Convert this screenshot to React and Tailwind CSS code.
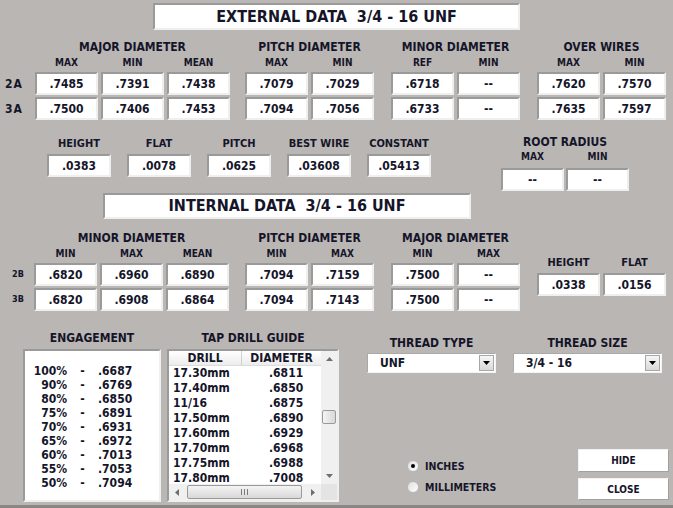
import React from "react";

const FONT = "font-[family-name:'DejaVu_Sans_Condensed','DejaVu_Sans',sans-serif]";
const SUNKEN =
  "bg-white border-2 border-t-[#9a9a9a] border-l-[#9a9a9a] border-r-[#efefef] border-b-[#efefef]";

const Field = ({ children, className = "" }) => (
  <div className={`flex items-center justify-center ${SUNKEN} text-[12px] font-bold leading-none ${className}`}>
    {children}
  </div>
);

const Group = ({ title, cols, rows, className = "" }) => (
  <div className={`flex flex-col ${className}`}>
    <div className="h-[14px] text-center text-[12px] font-bold leading-[14px]">{title}</div>
    <div className="mt-[2px] flex gap-[3px]">
      {cols.map((c) => (
        <div key={c} className="h-[13px] w-[63px] text-center text-[10px] font-bold leading-[13px]">
          {c}
        </div>
      ))}
    </div>
    <div className="mt-[3px] flex flex-col gap-[2px]">
      {rows.map((r, i) => (
        <div key={i} className="flex gap-[3px]">
          {r.map((v, j) => (
            <Field key={j} className="h-[23px] w-[63px]">
              {v}
            </Field>
          ))}
        </div>
      ))}
    </div>
  </div>
);

const RowLabels = ({ labels, className }) => (
  <div className={`flex flex-col pt-[32px] ${className}`}>
    {labels.map((l, i) => (
      <div key={l} className={`flex h-[23px] items-center font-bold ${i ? "mt-[2px]" : ""}`}>
        {l}
      </div>
    ))}
  </div>
);

const Triangle = ({ dir, className = "" }) => {
  const pts = {
    up: "0,4 3.5,0 7,4",
    down: "0,0 7,0 3.5,4",
    left: "4,0 4,7 0,3.5",
    right: "0,0 0,7 4,3.5",
  }[dir];
  const vb = dir === "up" || dir === "down" ? "0 0 7 4" : "0 0 4 7";
  const size = dir === "up" || dir === "down" ? "w-[7px] h-[4px]" : "w-[4px] h-[7px]";
  return (
    <svg viewBox={vb} className={`${size} ${className}`}>
      <polygon points={pts} fill="currentColor" />
    </svg>
  );
};

const Dropdown = ({ value, className = "" }) => (
  <div className={`flex h-[20px] items-center bg-white border border-t-[#a9a9a9] border-l-[#a9a9a9] border-r-[#f4f4f4] border-b-[#f4f4f4] ${className}`}>
    <span className="flex-1 pl-[12px] text-[12px] font-bold leading-none">{value}</span>
    <div className="mr-[1px] flex h-[16px] w-[15px] items-center justify-center border border-[#a7a7a7] bg-gradient-to-b from-[#f6f6f6] to-[#d9d9d9] text-black">
      <Triangle dir="down" />
    </div>
  </div>
);

const Radio = ({ checked, label }) => (
  <div className="flex h-[12px] items-center">
    <div className="flex h-[12px] w-[12px] items-center justify-center rounded-full border border-[#b8b8b8] bg-gradient-to-br from-[#dedede] to-white">
      {checked && <div className="h-[4px] w-[4px] rounded-full bg-black" />}
    </div>
    <span className="ml-[6px] text-[10.5px] font-bold leading-none">{label}</span>
  </div>
);

const Button = ({ children, className = "" }) => (
  <div className={`flex w-[91px] items-center justify-center border border-t-[#f2f2f2] border-l-[#f2f2f2] border-r-[#a0a0a0] border-b-[#a0a0a0] bg-white text-[10px] font-bold ${className}`}>
    {children}
  </div>
);

const engagement = [
  ["100%", ".6687"],
  ["90%", ".6769"],
  ["80%", ".6850"],
  ["75%", ".6891"],
  ["70%", ".6931"],
  ["65%", ".6972"],
  ["60%", ".7013"],
  ["55%", ".7053"],
  ["50%", ".7094"],
];

const drills = [
  ["17.30mm", ".6811"],
  ["17.40mm", ".6850"],
  ["11/16", ".6875"],
  ["17.50mm", ".6890"],
  ["17.60mm", ".6929"],
  ["17.70mm", ".6968"],
  ["17.75mm", ".6988"],
  ["17.80mm", ".7008"],
];

export default function App() {
  return (
    <div className={`flex h-[508px] w-[673px] flex-col overflow-hidden bg-[#bab6b3] text-[#15152a] ${FONT}`}>
      {/* external header */}
      <div className={`ml-[153px] mt-[3px] flex h-[27px] w-[367px] items-center justify-center ${SUNKEN} text-[16px] font-bold`}>
        EXTERNAL DATA&nbsp;&nbsp;3/4 - 16&nbsp;UNF
      </div>

      {/* external table */}
      <div className="mt-[10px] flex">
        <RowLabels labels={["2A", "3A"]} className="w-[35px] pl-[5px] text-[12px] tracking-[1px]" />
        <Group
          title="MAJOR DIAMETER"
          cols={["MAX", "MIN", "MEAN"]}
          rows={[
            [".7485", ".7391", ".7438"],
            [".7500", ".7406", ".7453"],
          ]}
        />
        <Group
          className="ml-[15px]"
          title="PITCH DIAMETER"
          cols={["MAX", "MIN"]}
          rows={[
            [".7079", ".7029"],
            [".7094", ".7056"],
          ]}
        />
        <Group
          className="ml-[17px]"
          title="MINOR DIAMETER"
          cols={["REF", "MIN"]}
          rows={[
            [".6718", "--"],
            [".6733", "--"],
          ]}
        />
        <Group
          className="ml-[17px]"
          title="OVER WIRES"
          cols={["MAX", "MIN"]}
          rows={[
            [".7620", ".7570"],
            [".7635", ".7597"],
          ]}
        />
      </div>

      {/* constants */}
      <div className="mt-[16px] flex items-start">
        <div className="ml-[47px] mt-[1px] flex gap-[16px]">
          {[
            ["HEIGHT", ".0383"],
            ["FLAT", ".0078"],
            ["PITCH", ".0625"],
            ["BEST WIRE", ".03608"],
            ["CONSTANT", ".05413"],
          ].map(([l, v]) => (
            <div key={l} className="flex w-[64px] flex-col">
              <div className="h-[13px] text-center text-[11px] font-bold leading-[13px]">{l}</div>
              <Field className="mt-[4px] h-[23px]">{v}</Field>
            </div>
          ))}
        </div>
        <div className="ml-[70px] flex flex-col">
          <div className="h-[13px] text-center text-[12px] font-bold leading-[13px]">ROOT RADIUS</div>
          <div className="mt-[2px] flex gap-[2px]">
            <div className="h-[12px] w-[63px] text-center text-[10px] font-bold leading-[12px]">MAX</div>
            <div className="h-[12px] w-[63px] text-center text-[10px] font-bold leading-[12px]">MIN</div>
          </div>
          <div className="mt-[5px] flex gap-[2px]">
            <Field className="h-[23px] w-[63px]">--</Field>
            <Field className="h-[23px] w-[63px]">--</Field>
          </div>
        </div>
      </div>

      {/* internal header */}
      <div className={`ml-[103px] mt-[2px] flex h-[26px] w-[368px] items-center justify-center ${SUNKEN} text-[16px] font-bold`}>
        INTERNAL DATA&nbsp;&nbsp;3/4 - 16&nbsp;UNF
      </div>

      {/* internal table */}
      <div className="mt-[12px] flex">
        <RowLabels labels={["2B", "3B"]} className="w-[34px] pl-[12px] text-[9px]" />
        <Group
          title="MINOR DIAMETER"
          cols={["MIN", "MAX", "MEAN"]}
          rows={[
            [".6820", ".6960", ".6890"],
            [".6820", ".6908", ".6864"],
          ]}
        />
        <Group
          className="ml-[16px]"
          title="PITCH DIAMETER"
          cols={["MIN", "MAX"]}
          rows={[
            [".7094", ".7159"],
            [".7094", ".7143"],
          ]}
        />
        <Group
          className="ml-[17px]"
          title="MAJOR DIAMETER"
          cols={["MIN", "MAX"]}
          rows={[
            [".7500", "--"],
            [".7500", "--"],
          ]}
        />
        <div className="ml-[17px] mt-[25px] flex gap-[3px]">
          {[
            ["HEIGHT", ".0338"],
            ["FLAT", ".0156"],
          ].map(([l, v]) => (
            <div key={l} className="flex w-[63px] flex-col">
              <div className="h-[13px] text-center text-[11px] font-bold leading-[13px]">{l}</div>
              <Field className="mt-[4px] h-[23px]">{v}</Field>
            </div>
          ))}
        </div>
      </div>

      {/* bottom */}
      <div className="mt-[21px] flex items-start">
        {/* engagement */}
        <div className="ml-[23px] flex w-[138px] flex-col">
          <div className="h-[13px] text-center text-[12px] font-bold leading-[13px]">ENGAGEMENT</div>
          <div className={`mt-[4px] h-[153px] ${SUNKEN} pt-[13px]`}>
            {engagement.map(([p, v]) => (
              <div key={p} className="flex h-[14px] text-[12px] font-bold leading-[14px]">
                <span className="w-[42px] text-right">{p}</span>
                <span className="w-[31px] text-center">-</span>
                <span>{v}</span>
              </div>
            ))}
          </div>
        </div>

        {/* tap drill */}
        <div className="ml-[6px] flex w-[172px] flex-col">
          <div className="h-[13px] text-center text-[12px] font-bold leading-[13px]">TAP DRILL GUIDE</div>
          <div className={`mt-[4px] flex h-[153px] flex-col ${SUNKEN}`}>
            <div className="flex h-[133px]">
              <div className="flex w-[152px] flex-col overflow-hidden">
                <div className="flex h-[15px] shrink-0 border-b border-[#dcdcdc] bg-gradient-to-b from-white to-[#ececec] text-[12px] font-bold leading-[15px]">
                  <div className="w-[73px] border-r border-[#d0d0d0] text-center">DRILL</div>
                  <div className="flex-1 text-center">DIAMETER</div>
                </div>
                {drills.map(([d, v]) => (
                  <div key={d} className="flex h-[15px] shrink-0 text-[12px] font-bold leading-[15px]">
                    <span className="w-[100px] pl-[4px]">{d}</span>
                    <span>{v}</span>
                  </div>
                ))}
              </div>
              <div className="flex w-[16px] flex-col items-center bg-[#f0f0f0] text-[#6e6e6e]">
                <div className="flex h-[16px] items-center justify-center">
                  <Triangle dir="up" />
                </div>
                <div className="mt-[43px] h-[14px] w-[14px] rounded-[2px] border border-[#9a9a9a] bg-gradient-to-r from-[#f4f4f4] to-[#d8d8d8]" />
                <div className="mt-auto flex h-[16px] items-center justify-center">
                  <Triangle dir="down" />
                </div>
              </div>
            </div>
            <div className="flex h-[16px] bg-[#f0f0f0] text-[#6e6e6e]">
              <div className="flex w-[16px] items-center justify-center">
                <Triangle dir="left" />
              </div>
              <div className="ml-[2px] flex h-[14px] w-[115px] items-center justify-center gap-[2px] self-center rounded-[2px] border border-[#9a9a9a] bg-gradient-to-b from-[#f4f4f4] to-[#d8d8d8]">
                <div className="h-[6px] w-px bg-[#7a7a7a]" />
                <div className="h-[6px] w-px bg-[#7a7a7a]" />
                <div className="h-[6px] w-px bg-[#7a7a7a]" />
              </div>
              <div className="ml-[3px] flex w-[16px] items-center justify-center">
                <Triangle dir="right" />
              </div>
              <div className="ml-auto w-[16px] bg-[#e4e4e4]" />
            </div>
          </div>
        </div>

        {/* right controls */}
        <div className="ml-[28px] flex w-[301px] flex-col">
          <div className="mt-[5px] flex gap-[17px]">
            <div className="flex w-[129px] flex-col">
              <div className="h-[13px] text-center text-[12px] font-bold leading-[13px]">THREAD TYPE</div>
              <Dropdown className="mt-[3px]" value="UNF" />
            </div>
            <div className="flex w-[149px] flex-col">
              <div className="h-[13px] text-center text-[12px] font-bold leading-[13px]">THREAD SIZE</div>
              <Dropdown className="mt-[3px]" value="3/4 - 16" />
            </div>
          </div>
          <div className="mt-[76px] flex items-start">
            <div className="ml-[40px] mt-[11px] flex flex-col gap-[9px]">
              <Radio checked label="INCHES" />
              <Radio label="MILLIMETERS" />
            </div>
            <div className="ml-auto mr-[-1px] flex flex-col gap-[6px]">
              <Button className="h-[23px]">HIDE</Button>
              <Button className="h-[22px]">CLOSE</Button>
            </div>
          </div>
        </div>
      </div>

      <div className="mt-auto h-[3px] bg-[#8a8683]" />
    </div>
  );
}
